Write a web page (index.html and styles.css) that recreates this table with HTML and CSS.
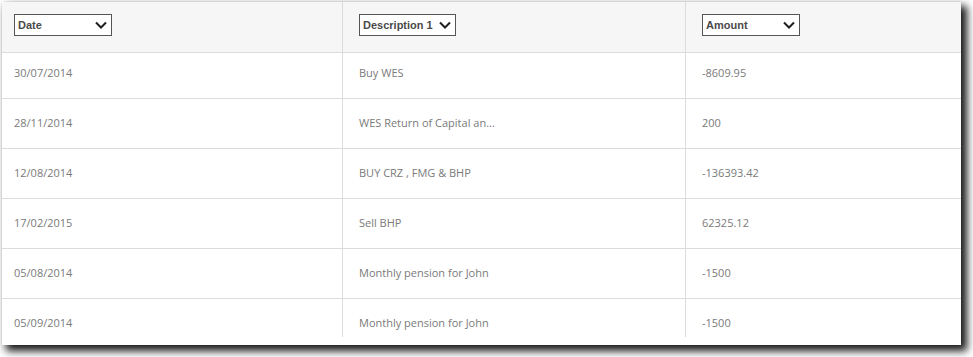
FILE: index.html
```html
<!DOCTYPE html>
<html>
<head>
<meta charset="utf-8">
<link rel="stylesheet" href="styles.css">
</head>
<body>
<div class="card">
  <div class="clip">
    <div class="row head">
      <div class="cell first"><div class="sel sel-date"><span>Date</span><svg width="12" height="8" viewBox="0 0 12 8"><path d="M1 1.5 L6 6.5 L11 1.5" fill="none" stroke="#1f1f1f" stroke-width="2"/></svg></div></div>
      <div class="cell"><div class="sel sel-desc"><span>Description 1</span><svg width="12" height="8" viewBox="0 0 12 8"><path d="M1 1.5 L6 6.5 L11 1.5" fill="none" stroke="#1f1f1f" stroke-width="2"/></svg></div></div>
      <div class="cell last"><div class="sel sel-amt"><span>Amount</span><svg width="12" height="8" viewBox="0 0 12 8"><path d="M1 1.5 L6 6.5 L11 1.5" fill="none" stroke="#1f1f1f" stroke-width="2"/></svg></div></div>
    </div>
    <div class="row body r1"><div class="cell first">30/07/2014</div><div class="cell">Buy WES</div><div class="cell last">-8609.95</div></div>
    <div class="row body"><div class="cell first">28/11/2014</div><div class="cell">WES Return of Capital an...</div><div class="cell last">200</div></div>
    <div class="row body"><div class="cell first">12/08/2014</div><div class="cell">BUY CRZ , FMG &amp; BHP</div><div class="cell last">-136393.42</div></div>
    <div class="row body"><div class="cell first">17/02/2015</div><div class="cell">Sell BHP</div><div class="cell last">62325.12</div></div>
    <div class="row body"><div class="cell first">05/08/2014</div><div class="cell">Monthly pension for John</div><div class="cell last">-1500</div></div>
    <div class="row body"><div class="cell first">05/09/2014</div><div class="cell">Monthly pension for John</div><div class="cell last">-1500</div></div>
  </div>
</div>
</body>
</html>
```
FILE: styles.css
```css
html, body {
  margin: 0;
  padding: 0;
  background: #ffffff;
}
body {
  padding: 2px 0 12px 2px;
  min-height: 357px;
  box-sizing: border-box;
  font-family: "Open Sans", "Liberation Sans", sans-serif;
}
.card {
  width: 959px;
  height: 343px;
  background: #ffffff;
  box-shadow: 5px 5px 8px 1px rgba(0, 0, 0, 0.9), 0 0 2px rgba(0, 0, 0, 0.12);
}
.clip {
  height: 335px;
  overflow: hidden;
}
.row {
  display: grid;
  grid-template-columns: 341px 343px 275px;
}
.cell {
  box-sizing: border-box;
  border-right: 1px solid #dcdcdc;
  border-bottom: 1px solid #dcdcdc;
  padding-left: 16px;
}
.cell.first { padding-left: 12px; }
.cell.last { border-right: none; }
.head .cell {
  height: 51px;
  background: #f6f6f6;
  padding-top: 12px;
}
.body .cell {
  height: 50px;
  padding-top: 17px;
  font-size: 11px;
  line-height: 14px;
  color: #7a7a7a;
}
.body.r1 .cell {
  height: 46px;
  padding-top: 13px;
}
.sel {
  display: flex;
  align-items: center;
  justify-content: space-between;
  height: 22px;
  box-sizing: border-box;
  border: 1px solid #555555;
  background: #ffffff;
  padding: 0 4px 0 3px;
  font-family: "Liberation Sans", Arial, sans-serif;
  font-weight: bold;
  font-size: 11px;
  color: #4a4a4a;
}
.sel-date { width: 98px; }
.sel-desc { width: 97px; }
.sel-amt { width: 98px; }
.sel svg { display: block; flex: none; }
```
